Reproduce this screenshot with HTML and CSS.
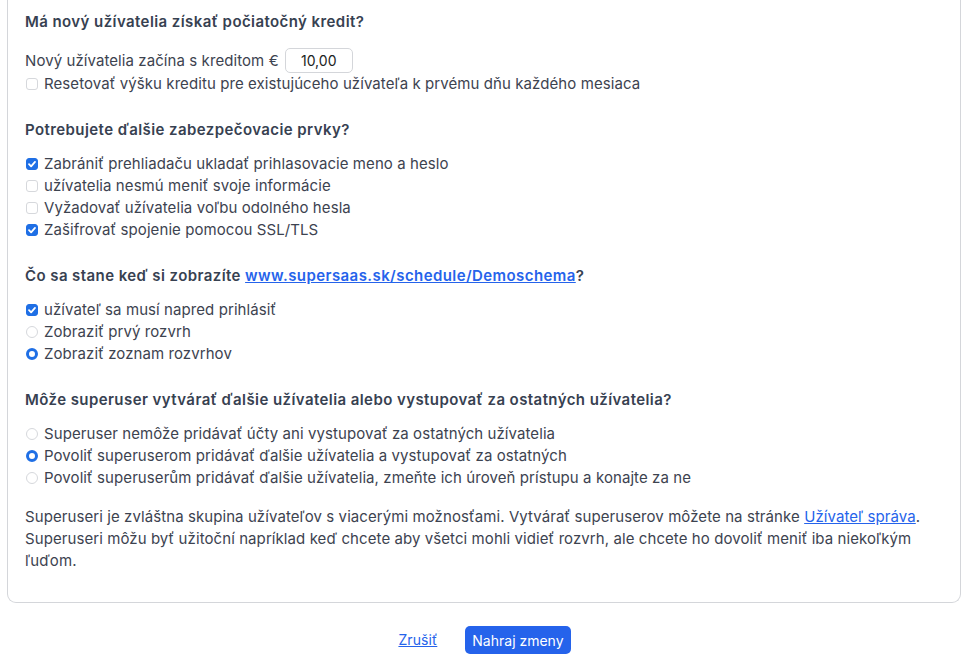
FILE: index.html
```html
<!DOCTYPE html>
<html lang="sk">
<head>
  <meta charset="UTF-8">
  <meta name="viewport" content="width=device-width, initial-scale=1.0">
  <title>Užívatelia</title>
  <link rel="stylesheet" href="styles.css">
</head>
<body>
  <form class="card">
    <div class="section">
      <h3 class="section-title">Má nový užívatelia získať počiatočný kredit?</h3>
      <div class="credit-row">
        <span>Nový užívatelia začína s kreditom €</span>
        <input type="text" class="credit-input" value="10,00">
      </div>
      <label class="option"><input type="checkbox" class="check"> Resetovať výšku kreditu pre existujúceho užívateľa k prvému dňu každého mesiaca</label>
    </div>

    <div class="section">
      <h3 class="section-title">Potrebujete ďalšie zabezpečovacie prvky?</h3>
      <label class="option"><input type="checkbox" class="check" checked> Zabrániť prehliadaču ukladať prihlasovacie meno a heslo</label>
      <label class="option"><input type="checkbox" class="check"> užívatelia nesmú meniť svoje informácie</label>
      <label class="option"><input type="checkbox" class="check"> Vyžadovať užívatelia voľbu odolného hesla</label>
      <label class="option"><input type="checkbox" class="check" checked> Zašifrovať spojenie pomocou SSL/TLS</label>
    </div>

    <div class="section">
      <h3 class="section-title">Čo sa stane keď si zobrazíte <a href="#">www.supersaas.sk/schedule/Demoschema</a>?</h3>
      <label class="option"><input type="checkbox" class="check" checked> užívateľ sa musí napred prihlásiť</label>
      <label class="option"><input type="radio" name="start" class="radio"> Zobraziť prvý rozvrh</label>
      <label class="option"><input type="radio" name="start" class="radio" checked> Zobraziť zoznam rozvrhov</label>
    </div>

    <div class="section">
      <h3 class="section-title">Môže superuser vytvárať ďalšie užívatelia alebo vystupovať za ostatných užívatelia?</h3>
      <label class="option"><input type="radio" name="super" class="radio"> Superuser nemôže pridávať účty ani vystupovať za ostatných užívatelia</label>
      <label class="option"><input type="radio" name="super" class="radio" checked> Povoliť superuserom pridávať ďalšie užívatelia a vystupovať za ostatných</label>
      <label class="option"><input type="radio" name="super" class="radio"> Povoliť superuserům pridávať ďalšie užívatelia, zmeňte ich úroveň prístupu a konajte za ne</label>
    </div>

    <p class="note">Superuseri je zvláštna skupina užívateľov s viacerými možnosťami. Vytvárať superuserov môžete na stránke <a href="#">Užívateľ správa</a>. Superuseri môžu byť užitoční napríklad keď chcete aby všetci mohli vidieť rozvrh, ale chcete ho dovoliť meniť iba niekoľkým ľuďom.</p>
  </form>

  <div class="actions">
    <a href="#" class="cancel">Zrušiť</a>
    <button type="button" class="btn-primary">Nahraj zmeny</button>
  </div>
</body>
</html>
```

FILE: styles.css
```css
body {
  margin: 0;
  padding: 0;
  background: white;
  font-family: Inter, "Noto Sans", sans-serif;
  font-size: 15px;
  line-height: 22px;
  letter-spacing: 0.08px;
  color: #3d4350;
}
a {
  color: #2563eb;
  text-decoration: underline;
}
.card {
  margin: 0 8px 0 7px;
  padding: 11px 16px 30px 17px;
  border: 1px solid #d4d6da;
  border-top: none;
  border-radius: 0 0 9px 9px;
}
.section {
  margin-bottom: 24px;
}
.section-title {
  margin: 0 0 12px 0;
  font-size: 15px;
  line-height: 22px;
  font-weight: 600;
  letter-spacing: 0.42px;
  color: #374151;
}
.credit-row {
  display: flex;
  align-items: center;
  gap: 6px;
  height: 25px;
  margin-top: 15px;
}
.credit-input {
  width: 68px;
  height: 25px;
  box-sizing: border-box;
  border: 1px solid #d4d6da;
  border-radius: 5px;
  font-family: inherit;
  font-size: 14px;
  color: #222;
  text-align: center;
  padding: 0;
}
.option {
  display: flex;
  align-items: center;
  gap: 6px;
  height: 22px;
  white-space: nowrap;
}
.check, .radio {
  -webkit-appearance: none;
  appearance: none;
  width: 12px;
  height: 12px;
  margin: 0 0 0 1px;
  border: 1px solid #d6d8dc;
  background: white;
  flex-shrink: 0;
}
.check {
  border-radius: 3px;
}
.check:checked {
  border-color: #1f6fe5;
  background: #1f6fe5 url("data:image/svg+xml;utf8,<svg xmlns='http://www.w3.org/2000/svg' viewBox='0 0 12 12'><path d='M3 6.2 L5.1 8.3 L9 3.9' fill='none' stroke='white' stroke-width='1.8' stroke-linecap='round' stroke-linejoin='round'/></svg>") center / 12px no-repeat;
}
.radio {
  border-radius: 50%;
}
.radio:checked {
  border: 3.5px solid #1f6fe5;
  background: white;
}
.note {
  margin: -7px 0 0 0;
}
.actions {
  display: flex;
  justify-content: center;
  align-items: center;
  gap: 28px;
  margin-top: 23px;
}
.cancel {
  font-size: 14px;
}
.btn-primary {
  height: 28px;
  padding: 0 7px;
  border: none;
  border-radius: 5px;
  background: #2563eb;
  color: white;
  font-family: inherit;
  font-size: 14px;
  letter-spacing: 0;
  cursor: pointer;
}
```
